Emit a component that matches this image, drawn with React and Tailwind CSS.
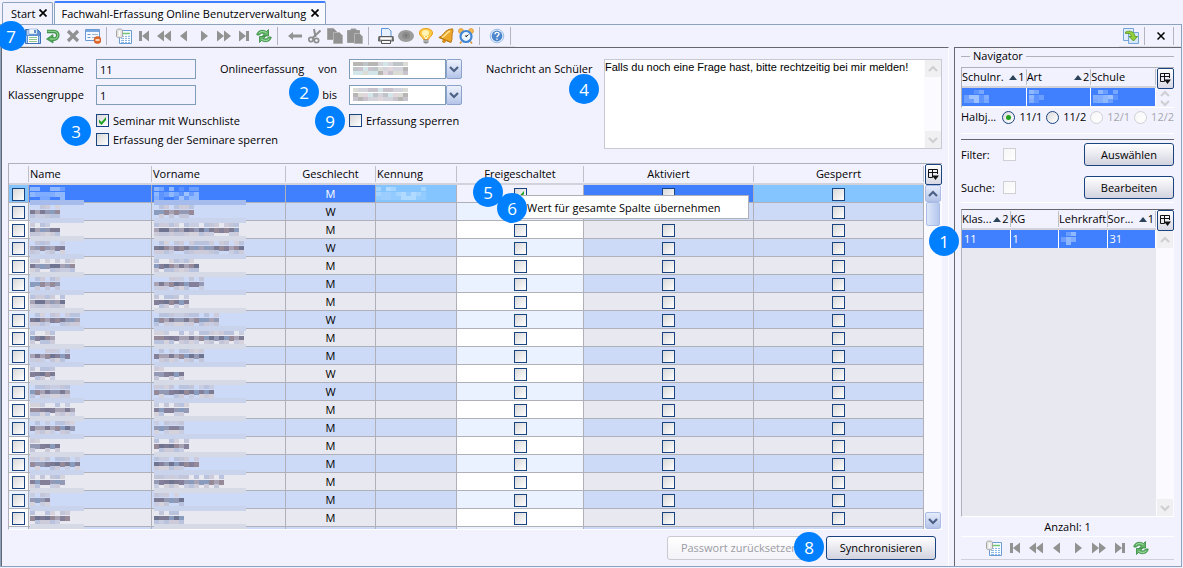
import React, { useState } from "react";

const COLUMNS = [
  { title: "", width: "w-[20px]" },
  { title: "Name", width: "w-[123px]" },
  { title: "Vorname", width: "w-[134px]" },
  { title: "Geschlecht", width: "w-[90px]", center: true },
  { title: "Kennung", width: "w-[81px]" },
  { title: "Freigeschaltet", width: "w-[127px]", center: true },
  { title: "Aktiviert", width: "w-[170px]", center: true },
  { title: "Gesperrt", width: "", center: true },
];

// name and first name are only kept as a number of mosaic cells
const STUDENTS = [
  { sex: "M", name: 7, first: 9 },
  { sex: "W", name: 6, first: 8 },
  { sex: "M", name: 6, first: 17 },
  { sex: "W", name: 7, first: 18 },
  { sex: "M", name: 9, first: 9 },
  { sex: "M", name: 6, first: 10 },
  { sex: "M", name: 7, first: 7 },
  { sex: "W", name: 10, first: 13 },
  { sex: "M", name: 5, first: 18 },
  { sex: "M", name: 8, first: 10 },
  { sex: "W", name: 5, first: 6 },
  { sex: "W", name: 8, first: 12 },
  { sex: "M", name: 9, first: 7 },
  { sex: "M", name: 9, first: 6 },
  { sex: "M", name: 6, first: 7 },
  { sex: "M", name: 10, first: 9 },
  { sex: "M", name: 7, first: 14 },
  { sex: "M", name: 4, first: 6 },
  { sex: "M", name: 8, first: 6 },
  { sex: "", name: 0, first: 0 },
];

const TONES = {
  dark: ["#7d7b93", "#9499b4", "#84809a", "#a8a3b4", "#6f7590", "#978a98", "#8a9cbd"],
  soft: ["#c3c5d8", "#cdcbd9", "#b9c3de", "#d5d2dc", "#c8cde2"],
  light: ["#80adff", "#8fb8ff", "#6b9eff", "#9dc2ff", "#5d93ff", "#78a7ff"],
  sky: ["#a5d4ff", "#9bceff", "#b0daff", "#92cbff"],
  paper: ["#d4d4dc", "#c9c3cd", "#dcdcd6", "#bfc4c8", "#e0d6dc", "#d2e6ea", "#b8b6b4"],
};

// Pixelated block that hides personal data
function Mosaic({ cells, seed = 1, tone = "dark", strip, stripWidth = 54 }) {
  const list = [];
  for (let y = 0; y < 3; y++) {
    for (let x = 0; x < cells; x++) {
      const n = (x * 7 + y * 11 + seed * 13 + x * x * 3 + seed * x) % 23;
      let colors = TONES[tone];
      if (tone === "dark" && y !== 1) colors = TONES.soft;
      if (tone !== "paper" && y === 0 && n % 3 === 0) continue;
      if (tone !== "paper" && y === 2 && n % 4 === 0) continue;
      list.push(
        <rect key={`${x}-${y}`} x={x * 5} y={1 + y * 4 + (y ? 1 : 0)} width="5" height={y === 1 ? 5 : 4} fill={colors[n % colors.length]} />
      );
    }
  }
  return (
    <svg aria-hidden="true" width={Math.max(cells * 5, strip ? stripWidth : 0)} height="16" shapeRendering="crispEdges" className="block overflow-visible">
      {strip && <rect x="0" y="14" width={stripWidth} height="5" fill={strip} />}
      {list}
    </svg>
  );
}

function Icon({ children }) {
  return (
    <svg aria-hidden="true" width="16" height="16" viewBox="0 0 16 16" fill="none" className="block">
      {children}
    </svg>
  );
}

const icons = {
  save: (
    <Icon>
      <path d="M.5 1.5h12l3 3v11h-15z" fill="#5d8fd0" stroke="#3d72b8" />
      <path d="M2 2h2v5H2z" fill="#a9cbf2" />
      <path d="M4 1h8v5H4z" fill="#f4f8fd" stroke="#86abd9" strokeWidth=".6" />
      <path d="M9 2h2v3H9z" fill="#5d8fd0" />
      <path d="M3 8h10v7H3z" fill="#fff" />
      <path d="M4 9.5h8M4 11.500h8M4 13.500h8" stroke="#8fc48d" />
      <path d="M1.500 8v7M14.500 8v7" stroke="#a9cbf2" />
    </Icon>
  ),
  undo: (
    <Icon>
      <path d="M2 3.500h7a3.800 3.800 0 0 1 0 7.600H7" stroke="#3f9149" strokeWidth="3.600" />
      <path d="M8 6.600v8.400L1.500 11z" fill="#4ea557" stroke="#3f9149" strokeWidth=".8" />
      <path d="M2.500 3.400H9a3.800 3.800 0 0 1 0 7.600H5" stroke="#86cf87" strokeWidth="1.400" />
    </Icon>
  ),
  remove: (
    <Icon>
      <path d="M3 3l10 10M13 3L3 13" stroke="#919191" strokeWidth="3.200" />
    </Icon>
  ),
  form: (
    <Icon>
      <path d="M.5 1.500h14v11H.5z" fill="#f4f8fe" stroke="#6a9ad6" />
      <path d="M1 2h13v2H1z" fill="#7aa8e0" />
      <path d="M2.500 6.500h3M2.500 9.500h3" stroke="#6a9ad6" />
      <path d="M7 6.500h6M7 9.500h4" stroke="#9db6d6" />
      <circle cx="12.500" cy="12" r="3.500" fill="#e46a2a" stroke="#c14d16" strokeWidth=".6" />
      <path d="M10.500 12h4" stroke="#fff" strokeWidth="1.400" />
    </Icon>
  ),
  sheet: (
    <Icon>
      <path d="M3.500 2.500h12v13h-12z" fill="#f6fbff" stroke="#6c9cd4" />
      <path d="M7 5.500h7" stroke="#74c474" strokeWidth="1.500" />
      <path d="M5 8.500h9M5 10.500h9M5 12.500h9M5 14.500h9" stroke="#8fb8e6" />
      <path d="M8.500 7v8M11.500 7v8" stroke="#fff" />
      <path d="M.500 2.500c0-2 6-2 6 0v6c0 1.500-6 1.500-6 0z" fill="#e4e4e0" stroke="#a5a5a0" />
      <path d="M3.500 3v5" stroke="#fff" strokeWidth="1.500" />
    </Icon>
  ),
  first: (
    <Icon>
      <path d="M3 3h3v10H3zM13 2.500v11L6 8z" fill="#929292" />
    </Icon>
  ),
  rewind: (
    <Icon>
      <path d="M8 2.500v11L1 8zM15 2.500v11L8 8z" fill="#929292" />
    </Icon>
  ),
  prev: (
    <Icon>
      <path d="M11 2.500v11L4 8z" fill="#929292" />
    </Icon>
  ),
  next: (
    <Icon>
      <path d="M5 2.500v11L12 8z" fill="#929292" />
    </Icon>
  ),
  forward: (
    <Icon>
      <path d="M1 2.500v11L8 8zM8 2.500v11L15 8z" fill="#929292" />
    </Icon>
  ),
  last: (
    <Icon>
      <path d="M10 3h3v10h-3zM3 2.500v11L10 8z" fill="#929292" />
    </Icon>
  ),
  refresh: (
    <Icon>
      <path d="M.8 7C1 3 6 .8 10.500 3.500L12.500 1.500V8H6.500L8.500 5.800C6 4.500 4 5.500 3.500 7z" fill="#62b568" stroke="#338a3d" strokeWidth=".8" />
      <path d="M15.200 9c-.2 4-5.200 6.200-9.700 3.500L3.500 14.500V8.500h6L7.500 10.500c2.500 1 4.500 0 5-1.500z" fill="#62b568" stroke="#338a3d" strokeWidth=".8" />
      <path d="M3 5c1.500-2 5-2 7.500-.200M13 11c-1.500 2-5 2-7.500.200" stroke="#a5dca4" />
    </Icon>
  ),
  back: (
    <Icon>
      <path d="M1 8l5-4v2.500h9v3H6V12z" fill="#929292" />
    </Icon>
  ),
  cut: (
    <Icon>
      <path d="M7 1l1.500 8M13.500 2.500L5 10.500" stroke="#8e8e8e" strokeWidth="2" />
      <circle cx="4" cy="11.500" r="2.200" stroke="#8e8e8e" strokeWidth="1.700" />
      <circle cx="9.500" cy="12.500" r="2.200" stroke="#8e8e8e" strokeWidth="1.700" />
    </Icon>
  ),
  copy: (
    <Icon>
      <path d="M.500.500h6l3 3v8h-9z" fill="#929292" stroke="#a6a6a6" />
      <path d="M6.500 4.500h6l3 3v8h-9z" fill="#929292" stroke="#b4b4b4" />
    </Icon>
  ),
  paste: (
    <Icon>
      <path d="M.500 2.500H4V1h5v1.500h3.500v12H.5z" fill="#929292" stroke="#9d9d9d" />
      <path d="M7.500 5.500h5l3 3v7h-8z" fill="#929292" stroke="#b4b4b4" />
    </Icon>
  ),
  print: (
    <Icon>
      <path d="M3.500.500h7l2.500 2.500v6H3.500z" fill="#e6f1fd" stroke="#5c94d6" />
      <path d="M1 8.500h14l.500 4.500H.5z" fill="#d9d9d9" stroke="#5a5a5a" />
      <path d="M2 10.500h12" stroke="#fff" />
      <path d="M3.500 12.500h9v3h-9z" fill="#f8f8f8" stroke="#555" />
      <path d="M1.500 8v5M14.500 8v5" stroke="#6b6b6b" strokeWidth="1.500" />
    </Icon>
  ),
  eye: (
    <Icon>
      <ellipse cx="8" cy="8" rx="8" ry="6" fill="#9c9c9c" />
      <ellipse cx="8" cy="7.500" rx="4" ry="3.500" fill="#8b8b8b" />
      <circle cx="8" cy="7.500" r="1.200" fill="#757575" />
    </Icon>
  ),
  bulb: (
    <Icon>
      <path d="M5.500 11.500C5 9 1.500 8.500 1.500 5S4.500.500 8 .500 14.500 2 14.500 5 11 9 10.500 11.500z" fill="#fdca45" stroke="#ee9c1c" />
      <ellipse cx="7.500" cy="5" rx="3.500" ry="3" fill="#fff3b5" />
      <path d="M6 8l2 3 2-3" stroke="#fff" />
      <path d="M5.500 11.500h5v3l-1.500 1h-2l-1.500-1z" fill="#8d8d8d" />
      <path d="M5.500 13h5" stroke="#ccc" />
    </Icon>
  ),
  bell: (
    <Icon>
      <path d="M.800 9.500C5 8.500 6 3 11 1.500L14.500.8 15 3c-2 4 0 7-2 11.500z" fill="#eda82b" stroke="#b97812" />
      <path d="M4 9.500c3.500-1 4-5 8-6.500" stroke="#ffdf88" strokeWidth="1.800" />
      <path d="M2 9.500l10 4.500" stroke="#b97812" />
      <circle cx="6" cy="13.200" r="1.800" fill="#d48c17" />
    </Icon>
  ),
  clock: (
    <Icon>
      <circle cx="3" cy="3" r="2.500" fill="#f6bb52" stroke="#d9902b" strokeWidth=".7" />
      <circle cx="13" cy="3" r="2.500" fill="#f6bb52" stroke="#d9902b" strokeWidth=".7" />
      <path d="M3.500 13.500L2 15.500M12.500 13.500l1.500 2" stroke="#d9902b" strokeWidth="1.500" />
      <circle cx="8" cy="8.500" r="5.500" fill="#edf6ff" stroke="#4387d3" strokeWidth="2.200" />
      <path d="M8 9l2.500-2.500M8 9V7" stroke="#333" />
    </Icon>
  ),
  help: (
    <Icon>
      <circle cx="8" cy="8" r="6.800" fill="#e9f2fc" stroke="#86aee0" strokeWidth=".8" />
      <circle cx="8" cy="8" r="5.400" fill="#4d86cc" />
      <path d="M6 6.300c0-2.500 4-2.500 4-.2C10 7.500 8 7.600 8 9.300" stroke="#fff" strokeWidth="1.400" />
      <path d="M7.300 10.400h1.400v1.400H7.300z" fill="#fff" />
    </Icon>
  ),
  swap: (
    <Icon>
      <path d="M.500.500h10v12H.5z" fill="#e2eefb" stroke="#74a5d8" />
      <path d="M5.500 4.500h10v11h-10z" fill="#d6e7fa" stroke="#74a5d8" />
      <path d="M2.500 4C7 2 11.500 3.500 12 8.500h2.500L10.500 13 6 8.500h2.500C8 6 6 5 2.500 5.500z" fill="#93cf38" stroke="#4f8f1c" strokeWidth=".8" />
    </Icon>
  ),
};

function ToolButton({ icon, label, disabled }) {
  return (
    <button type="button" aria-label={label} disabled={disabled} className="flex size-5 shrink-0 items-center justify-center">
      {icons[icon]}
    </button>
  );
}

function Separator() {
  return <span className="mr-[7px] ml-[3px] h-[18px] w-px shrink-0 bg-[#b4b4be]" />;
}

function NavButtons() {
  return (
    <>
      <ToolButton icon="sheet" label="Tabelle" />
      <ToolButton icon="first" label="Erster" disabled />
      <ToolButton icon="rewind" label="Zurückspulen" disabled />
      <ToolButton icon="prev" label="Vorheriger" disabled />
      <ToolButton icon="next" label="Nächster" disabled />
      <ToolButton icon="forward" label="Vorspulen" disabled />
      <ToolButton icon="last" label="Letzter" disabled />
      <ToolButton icon="refresh" label="Aktualisieren" />
    </>
  );
}

function Callout({ n, className }) {
  return (
    <span className={`pointer-events-none absolute z-20 flex size-[30px] items-center justify-center rounded-full bg-[#0080ff] font-['Open_Sans',sans-serif] text-[17px] leading-none text-white ${className}`}>
      {n}
    </span>
  );
}

function CheckBox({ id, label, checked = false, disabled = false }) {
  const [on, setOn] = useState(checked);
  return (
    <span className="inline-grid size-[13px] shrink-0 align-middle">
      <input
        id={id}
        type="checkbox"
        aria-label={label}
        checked={on}
        disabled={disabled}
        onChange={(e) => setOn(e.target.checked)}
        className="peer col-start-1 row-start-1 size-[13px] appearance-none border border-[#1a4480] bg-linear-to-br from-[#d8d8d8] to-white disabled:border-[#cfcfd4] disabled:from-[#f6f6f6]"
      />
      <svg aria-hidden="true" viewBox="0 0 13 13" className="pointer-events-none invisible col-start-1 row-start-1 size-[13px] peer-checked:visible">
        <path d="M3 5.500v3L5.500 11 10 6V3L5.500 8z" fill="#21a121" />
      </svg>
    </span>
  );
}

function Chevron({ up, color = "#4d6185" }) {
  return (
    <svg aria-hidden="true" width="10" height="8" viewBox="0 0 10 8" fill="none">
      <path d={up ? "M1 6l4-4 4 4" : "M1 2l4 4 4-4"} stroke={color} strokeWidth="2.200" />
    </svg>
  );
}

function ScrollButton({ up, disabled }) {
  const look = disabled ? "border-transparent bg-[#f0f0f3]" : "rounded-[2px] border-[#a9bce6] bg-linear-to-b from-[#e6ecfb] to-[#b4c4e8]";
  return (
    <button type="button" aria-label={up ? "Nach oben" : "Nach unten"} disabled={disabled} className={`flex h-[17px] w-4 shrink-0 items-center justify-center border ${look}`}>
      <Chevron up={up} color={disabled ? "#cfcfd3" : "#4d6185"} />
    </button>
  );
}

function ColumnButton() {
  return (
    <button type="button" aria-label="Spalten auswählen" className="flex h-[21px] w-[17px] shrink-0 items-center justify-center rounded-[2px] border border-[#1a4480] bg-linear-to-b from-white to-[#d8d8e4]">
      <svg aria-hidden="true" width="11" height="12" viewBox="0 0 11 12" fill="none">
        <path d="M4.500 8.500h-4v-8h9V5M.5 3.500h9M4.500.500v8" stroke="#111" />
        <path d="M4 6.500h7L7.500 11z" fill="#111" />
      </svg>
    </button>
  );
}

function PushButton({ children, disabled, className = "" }) {
  const look = disabled ? "border-[#c9c9d2] text-[#9b9ba3] to-[#f2f2f8]" : "border-[#1a4480] to-[#d3d3e0]";
  return (
    <button type="button" disabled={disabled} className={`rounded-[3px] border bg-linear-to-b from-white whitespace-nowrap ${look} ${className}`}>
      {children}
    </button>
  );
}

function DateBox({ id, label, cells, seed }) {
  return (
    <div className="flex h-5">
      <button id={id} type="button" aria-label={label} className="flex w-[97px] items-center border border-[#7f9db9] bg-white pl-[3px]">
        <Mosaic cells={cells} seed={seed} tone="paper" />
      </button>
      <button type="button" aria-label={`${label} Kalender`} className="flex w-4 items-center justify-center rounded-[2px] border border-[#8ba3cc] bg-linear-to-b from-[#eef2fc] to-[#b4c4e8]">
        <Chevron />
      </button>
    </div>
  );
}

function cellColor(column, row) {
  if (row === 0) {
    if (column === 5) return "bg-[#f2f2ff]";
    return column === 0 || column === 4 || column === 7 ? "bg-[#84c4ff]" : "bg-[#4080ff]";
  }
  const editable = column === 0 || column === 5;
  if (row % 2) return editable ? "bg-[#eaf1ff]" : "bg-[#ccd9f7]";
  return editable ? "bg-white" : "bg-[#e8e8f1]";
}

function StudentTable() {
  return (
    <div className="relative min-h-0 flex-1">
      <div className="flex h-full border-t border-l border-[#b0b0b8] border-b border-b-white">
        <div className="min-w-0 flex-1 overflow-hidden">
          <table className="w-full table-fixed border-separate border-spacing-0">
            <thead>
              <tr>
                {COLUMNS.map((c, i) => (
                  <th key={i} scope="col" className={`h-[21px] border-b-2 border-[#d2d2da] p-0 font-normal ${c.width} ${c.center ? "text-center" : "text-left"}`}>
                    <span className={`block h-4 overflow-hidden border-r border-[#c0c0c8] leading-4 whitespace-nowrap ${c.center ? "" : "pl-px"}`}>{c.title}</span>
                  </th>
                ))}
              </tr>
            </thead>
            <tbody>
              {STUDENTS.map((s, row) => {
                const cell = "h-[18px] border-r border-b border-[#b0b0b8] p-0 leading-[16px] ";
                const strip = row === 0 ? "#a5bcec" : row % 2 ? "#c9d4ec" : "#d6d9e6";
                const tone = row === 0 ? "light" : "dark";
                return (
                  <tr key={row}>
                    <td className={`${cell} ${cellColor(0, row)} text-center leading-[0]`}>
                      <CheckBox label={`Zeile ${row + 1}`} />
                    </td>
                    <td className={`${cell} ${cellColor(1, row)} pl-px`}>
                      {s.name > 0 && <Mosaic cells={s.name} seed={row + 1} tone={tone} strip={strip} />}
                    </td>
                    <td className={`${cell} ${cellColor(2, row)} pl-0.5`}>
                      {s.first > 0 && <Mosaic cells={s.first} seed={row + 5} tone={tone} strip={strip} stripWidth={92} />}
                    </td>
                    <td className={`${cell} ${cellColor(3, row)} text-center ${row === 0 ? "text-white" : ""}`}>{s.sex}</td>
                    <td className={`${cell} ${cellColor(4, row)}`}>{row === 0 && <Mosaic cells={10} seed={3} tone="sky" />}</td>
                    <td className={`${cell} ${cellColor(5, row)} text-center leading-[0]`}>
                      <CheckBox label="Freigeschaltet" checked={row === 0} />
                    </td>
                    <td className={`${cell} ${cellColor(6, row)} text-center leading-[0]`}>
                      <CheckBox label="Aktiviert" />
                    </td>
                    <td className={`${cell} ${cellColor(7, row)} text-center leading-[0]`}>
                      <CheckBox label="Gesperrt" />
                    </td>
                  </tr>
                );
              })}
            </tbody>
          </table>
        </div>
        <div className="flex w-[18px] shrink-0 flex-col items-center bg-[#fbfbff]">
          <ColumnButton />
          <ScrollButton up />
          <div className="h-6 w-[14px] rounded-[2px] border border-[#a9bce6] bg-linear-to-r from-[#dde6fa] to-[#b4c6ee]" />
          <div className="flex-1" />
          <ScrollButton />
        </div>
      </div>

      <Callout n={5} className="top-[14px] left-[465px]" />
      <div role="menu" className="absolute top-[32px] left-[503px] z-10 w-[238px] border border-[#b0b0b8] bg-white">
        <button type="button" role="menuitem" className="block w-full pt-1 pb-0.5 pl-[15px] text-left whitespace-nowrap">
          Wert für gesamte Spalte übernehmen
        </button>
      </div>
      <Callout n={6} className="top-[30px] left-[489px]" />
    </div>
  );
}

function Form() {
  const field = "h-5 w-[100px] border border-[#7f9db9] bg-[#f2f2ff] px-[3px]";
  return (
    <div className="flex items-start pt-[11px] pr-[6px] pb-[14px]">
      <div className="relative w-[82px] shrink-0 text-right leading-5">
        <label htmlFor="klassenname" className="block">Klassenname</label>
        <label htmlFor="klassengruppe" className="mt-[6px] block">Klassengruppe</label>
        <Callout n={3} className="top-[57px] left-[59px]" />
      </div>
      <div className="ml-3 w-[124px] shrink-0">
        <input id="klassenname" defaultValue="11" className={`block ${field}`} />
        <input id="klassengruppe" defaultValue="1" className={`mt-[6px] block ${field}`} />
        <div className="mt-[9px] flex h-[13px] items-center gap-1 whitespace-nowrap">
          <CheckBox id="wunschliste" checked />
          <label htmlFor="wunschliste">Seminar mit Wunschliste</label>
        </div>
        <div className="mt-[6px] flex h-[13px] items-center gap-1 whitespace-nowrap">
          <CheckBox id="seminare" />
          <label htmlFor="seminare">Erfassung der Seminare sperren</label>
        </div>
      </div>
      <div className="relative w-[117px] shrink-0 leading-5">
        <div className="flex justify-between whitespace-nowrap">
          <span>Onlineerfassung</span>
          <label htmlFor="von">von</label>
        </div>
        <label htmlFor="bis" className="mt-[6px] block text-right">bis</label>
        <Callout n={2} className="top-[18px] left-[69px]" />
        <Callout n={9} className="top-[47px] left-[95px]" />
      </div>
      <div className="ml-3 w-[113px] shrink-0">
        <DateBox id="von" label="von" cells={11} seed={4} />
        <div className="mt-[6px]">
          <DateBox id="bis" label="bis" cells={11} seed={9} />
        </div>
        <div className="mt-[9px] flex h-[13px] items-center gap-1 whitespace-nowrap">
          <CheckBox id="sperren" />
          <label htmlFor="sperren">Erfassung sperren</label>
        </div>
      </div>
      <div className="relative ml-6 w-[106px] shrink-0 leading-5">
        <label htmlFor="nachricht" className="block whitespace-nowrap">Nachricht an Schüler</label>
        <Callout n={4} className="top-[15px] left-[83px]" />
      </div>
      <div className="ml-3 flex h-[90px] min-w-0 flex-1 border border-[#c9c9d4] bg-white">
        <textarea
          id="nachricht"
          defaultValue="Falls du noch eine Frage hast, bitte rechtzeitig bei mir melden!"
          className="min-w-0 flex-1 resize-none overflow-hidden font-['Liberation_Sans',sans-serif] text-[11px] leading-[15px]"
        />
        <div className="flex w-[17px] flex-col items-center justify-between bg-[#fbfbff]">
          <ScrollButton up disabled />
          <ScrollButton disabled />
        </div>
      </div>
    </div>
  );
}

function SortMark({ n }) {
  return (
    <span className="flex shrink-0 items-center">
      <svg aria-hidden="true" width="8" height="5" viewBox="0 0 8 5">
        <path d="M4 0l4 5H0z" fill="#2b4259" />
      </svg>
      <span className="pl-px">{n}</span>
    </span>
  );
}

function NavTable({ columns, children }) {
  return (
    <table className="w-full table-fixed border-separate border-spacing-0">
      <thead>
        <tr>
          {columns.map((c) => (
            <th key={c.title} scope="col" className="h-5 border-b-2 border-[#d2d2da] p-0 text-left font-normal">
              <span className="flex h-4 items-center justify-between overflow-hidden border-r border-[#c0c0c8] pr-px leading-4 whitespace-nowrap">
                {c.title}
                {c.sort && <SortMark n={c.sort} />}
              </span>
            </th>
          ))}
        </tr>
      </thead>
      <tbody>
        <tr className="bg-[#4080ff] text-white">{children}</tr>
      </tbody>
    </table>
  );
}

function Term({ value, checked, disabled, onPick }) {
  return (
    <label className={`flex items-center gap-1 ${disabled ? "text-[#a5a5ac]" : ""}`}>
      <span className="inline-grid size-[13px] place-items-center">
        <input
          type="radio"
          name="halbjahr"
          value={value}
          checked={checked}
          disabled={disabled}
          onChange={() => onPick(value)}
          className="peer col-start-1 row-start-1 size-[13px] appearance-none rounded-full border border-[#1a4480] bg-linear-to-br from-[#dcdcdc] to-white disabled:border-[#d0d0d6] disabled:from-[#f6f6f6]"
        />
        <span className="pointer-events-none invisible col-start-1 row-start-1 size-[5px] rounded-full bg-[#21a121] peer-checked:visible" />
      </span>
      {value}
    </label>
  );
}

function Navigator() {
  const [term, setTerm] = useState("11/1");
  const td = "h-[18px] border-r border-white p-0 pl-0.5 leading-[18px]";

  return (
    <aside className="flex w-[227px] shrink-0 flex-col border-t border-l border-[#66666e] pr-[7px] pl-[6px]">
      <div className="flex h-4 items-center gap-[3px]">
        <span className="h-px w-[9px] bg-[#b0b0b8]" />
        <h2>Navigator</h2>
        <span className="h-px flex-1 bg-[#b0b0b8]" />
      </div>

      <div className="mt-[3px] flex h-[41px] border-t border-l border-[#b0b0b8] border-b border-b-white">
        <div className="min-w-0 flex-1">
          <NavTable columns={[{ title: "Schulnr.", sort: 1 }, { title: "Art", sort: 2 }, { title: "Schule" }]}>
            <td className={td}><Mosaic cells={5} seed={2} tone="light" /></td>
            <td className={td}><Mosaic cells={3} seed={5} tone="light" /></td>
            <td className={td}><Mosaic cells={5} seed={8} tone="light" /></td>
          </NavTable>
        </div>
        <div className="flex w-[18px] shrink-0 flex-col items-center">
          <ColumnButton />
          <div className="flex flex-1 flex-col items-center justify-around">
            <Chevron up color="#cfcfd3" />
            <Chevron color="#cfcfd3" />
          </div>
        </div>
      </div>

      <fieldset className="mt-px flex h-5 items-center whitespace-nowrap">
        <span>Halbj...</span>
        <div className="ml-auto flex gap-1">
          <Term value="11/1" checked={term === "11/1"} onPick={setTerm} />
          <Term value="11/2" checked={term === "11/2"} onPick={setTerm} />
          <Term value="12/1" checked={false} disabled onPick={setTerm} />
          <Term value="12/2" checked={false} disabled onPick={setTerm} />
        </div>
      </fieldset>

      <div className="mt-1 h-px shrink-0 bg-white" />
      <div className="mt-[5px] h-px shrink-0 bg-[#66666e]" />
      <div className="mt-[3px] flex items-center">
        <label htmlFor="filter" className="w-[42px]">Filter:</label>
        <CheckBox id="filter" disabled />
        <PushButton className="ml-auto h-[23px] w-[90px]">Auswählen</PushButton>
      </div>
      <div className="mt-[10px] flex items-center">
        <label htmlFor="suche" className="w-[42px]">Suche:</label>
        <CheckBox id="suche" disabled />
        <PushButton className="ml-auto h-[23px] w-[90px]">Bearbeiten</PushButton>
      </div>
      <div className="mt-[3px] h-px shrink-0 bg-white" />

      <div className="relative mt-[6px] min-h-0 flex-1">
        <div className="flex h-full border-t border-l border-t-[#66666e] border-l-[#b0b0b8] border-b border-b-white">
          <div className="min-w-0 flex-1 bg-[#e8e8f1]">
            <div className="bg-[#f2f2ff]">
              <NavTable columns={[{ title: "Klas...", sort: 2 }, { title: "KG" }, { title: "Lehrkraft" }, { title: "Sor...", sort: 1 }]}>
                <td className={td}>11</td>
                <td className={td}>1</td>
                <td className={td}><Mosaic cells={3} seed={6} tone="light" /></td>
                <td className={td}>31</td>
              </NavTable>
            </div>
          </div>
          <div className="flex w-[18px] shrink-0 flex-col items-center bg-[#fbfbff]">
            <ColumnButton />
            <ScrollButton up disabled />
            <div className="flex-1" />
            <ScrollButton disabled />
          </div>
        </div>
        <Callout n={1} className="top-[17px] left-[-32px]" />
      </div>

      <p className="h-[19px] text-center leading-[19px]">Anzahl: 1</p>
      <div className="mb-[6px] flex h-6 items-center justify-center gap-px border-t border-b border-t-white border-b-[#d0d0dc]">
        <NavButtons />
      </div>
    </aside>
  );
}

function Tab({ title, active }) {
  return (
    <div
      className={`flex items-center rounded-t-[2px] border border-b-0 border-[#8ba3bf] whitespace-nowrap ${
        active ? "h-[23px] border-t-2 border-t-[#4080ff] bg-[#f8f8ff] px-[6px]" : "h-[22px] bg-[#f2f2ff] pr-[5px] pl-[8px]"
      }`}
    >
      <button type="button" role="tab" aria-selected={!!active}>{title}</button>
      <button type="button" aria-label={`${title} schließen`} className={`pb-0.5 ${active ? "ml-[5px]" : "ml-[4px]"}`}>
        <svg aria-hidden="true" width="8" height="8" viewBox="0 0 8 8">
          <path d="M.5.500l7 7M7.500.500l-7 7" stroke="#000" strokeWidth="1.700" />
        </svg>
      </button>
    </div>
  );
}

export default function App() {
  return (
    <div className="flex h-screen flex-col overflow-hidden bg-[#f2f2ff] font-['Open_Sans','Noto_Sans',sans-serif] text-[11px] leading-4 text-black">
      <div role="tablist" className="flex h-6 shrink-0 items-end gap-px pl-[2px]">
        <Tab title="Start" />
        <Tab title="Fachwahl-Erfassung Online Benutzerverwaltung" active />
      </div>

      <div className="mr-px mb-px flex min-h-0 flex-1 flex-col border border-[#8ba3bf]">
        <header className="relative flex h-[22px] shrink-0 items-center">
          <div className="flex h-full w-[514px] items-center border-b border-[#dcdce6] pl-[22px]">
            <ToolButton icon="save" label="Speichern" />
            <ToolButton icon="undo" label="Rückgängig" />
            <ToolButton icon="remove" label="Löschen" disabled />
            <ToolButton icon="form" label="Formular leeren" />
            <Separator />
            <NavButtons />
            <Separator />
            <ToolButton icon="back" label="Zurück" disabled />
            <ToolButton icon="cut" label="Ausschneiden" disabled />
            <ToolButton icon="copy" label="Kopieren" disabled />
            <ToolButton icon="paste" label="Einfügen" disabled />
            <Separator />
            <ToolButton icon="print" label="Drucken" />
            <ToolButton icon="eye" label="Vorschau" disabled />
            <ToolButton icon="bulb" label="Tipp" />
            <ToolButton icon="bell" label="Erinnerung" />
            <ToolButton icon="clock" label="Wecker" />
            <Separator />
            <ToolButton icon="help" label="Hilfe" />
            <Separator />
          </div>
          <div className="ml-auto flex h-full w-[62px] items-center border-b border-[#dcdce6] pl-[2px]">
            <ToolButton icon="swap" label="Wechseln" />
            <Separator />
            <button type="button" aria-label="Schließen" className="flex size-5 items-center justify-center">
              <svg aria-hidden="true" width="8" height="8" viewBox="0 0 8 8">
                <path d="M.5.500l7 7M7.500.500l-7 7" stroke="#000" strokeWidth="1.500" />
              </svg>
            </button>
            <Separator />
          </div>
          <Callout n={7} className="top-[-4px] left-[-5px]" />
        </header>

        <div className="flex min-h-0 flex-1 gap-[5px]">
          <main className="flex min-w-0 flex-1 flex-col border-t border-r border-l border-[#66666e] border-r-white">
            <Form />
            <div className="flex min-h-0 flex-1 flex-col pr-[6px] pl-[6px]">
              <StudentTable />
            </div>
            <div className="relative flex shrink-0 justify-end gap-[14px] pt-[6px] pr-3 pb-[6px]">
              <PushButton disabled className="h-6 w-[145px]">Passwort zurücksetzen</PushButton>
              <PushButton className="h-6 w-[110px]">Synchronisieren</PushButton>
              <Callout n={8} className="top-[2px] right-[124px]" />
            </div>
          </main>
          <Navigator />
        </div>
      </div>
    </div>
  );
}
